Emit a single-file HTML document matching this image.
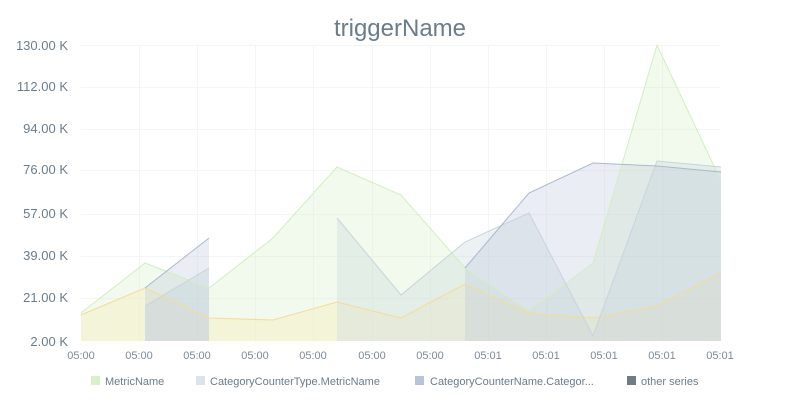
<!DOCTYPE html>
<html><head><meta charset="utf-8"><style>
body{margin:0;width:800px;height:400px;background:#fff;overflow:hidden;font-family:"Liberation Sans",sans-serif}
</style></head><body>
<svg width="800" height="400" xmlns="http://www.w3.org/2000/svg" font-family="Liberation Sans, sans-serif">
<text x="400" y="36" text-anchor="middle" font-size="24" fill="#6b7c8a">triggerName</text>
<g stroke="#f4f5f5" stroke-width="1">
<line x1="81" y1="45.5" x2="721" y2="45.5"/><line x1="81" y1="87.5" x2="721" y2="87.5"/><line x1="81" y1="129.5" x2="721" y2="129.5"/><line x1="81" y1="170.5" x2="721" y2="170.5"/><line x1="81" y1="214.5" x2="721" y2="214.5"/><line x1="81" y1="256.5" x2="721" y2="256.5"/><line x1="81" y1="298.5" x2="721" y2="298.5"/>
<line x1="139.5" y1="45" x2="139.5" y2="341"/><line x1="197.5" y1="45" x2="197.5" y2="341"/><line x1="255.5" y1="45" x2="255.5" y2="341"/><line x1="313.5" y1="45" x2="313.5" y2="341"/><line x1="372.5" y1="45" x2="372.5" y2="341"/><line x1="430.5" y1="45" x2="430.5" y2="341"/><line x1="488.5" y1="45" x2="488.5" y2="341"/><line x1="546.5" y1="45" x2="546.5" y2="341"/><line x1="604.5" y1="45" x2="604.5" y2="341"/><line x1="662.5" y1="45" x2="662.5" y2="341"/>
</g>
<g font-size="13" fill="#6b7c8a" text-anchor="end">
<text x="68" y="50">130.00 K</text><text x="68" y="91">112.00 K</text><text x="68" y="133">94.00 K</text><text x="68" y="174">76.00 K</text><text x="68" y="218">57.00 K</text><text x="68" y="260">39.00 K</text><text x="68" y="302">21.00 K</text><text x="68" y="346">2.00 K</text>
</g>
<g font-size="11" fill="#7d8a96" text-anchor="middle">
<text x="81" y="359">05:00</text><text x="139" y="359">05:00</text><text x="197" y="359">05:00</text><text x="255" y="359">05:00</text><text x="313" y="359">05:00</text><text x="372" y="359">05:00</text><text x="430" y="359">05:00</text><text x="488" y="359">05:01</text><text x="546" y="359">05:01</text><text x="604" y="359">05:01</text><text x="662" y="359">05:01</text><text x="720" y="359">05:01</text>
</g>
<!-- fills -->
<path d="M81,313 L145,263 L209,288 L273,238 L337,167 L401,195 L465,268 L529,311 L593,263 L657,45 L721,181 L721,341 L81,341Z" fill="#d4f0c4" fill-opacity="0.3"/>
<path d="M81,315 L145,288 L209,318 L273,320 L337,302 L401,318 L465,284 L529,313 L593,318 L657,306 L721,272 L721,341 L81,341Z" fill="#f6eec0" fill-opacity="0.45"/>
<path d="M145,306 L209,268 L209,341 L145,341Z" fill="#c9d6dc" fill-opacity="0.4"/>
<path d="M337,218 L401,295 L465,242 L529,213 L593,336 L657,161 L721,167 L721,341 L337,341Z" fill="#c9d6dc" fill-opacity="0.35"/>
<path d="M145,288 L209,238 L209,341 L145,341Z" fill="#b8c4dc" fill-opacity="0.3"/>
<path d="M465,268 L529,193 L593,163 L657,166 L721,172 L721,341 L465,341Z" fill="#b8c4dc" fill-opacity="0.3"/>
<!-- lines -->
<g fill="none" stroke-width="1">
<polyline points="81,313 145,263 209,288 273,238 337,167 401,195 465,268 529,311 593,263 657,45 721,181" stroke="#d2eec0"/>
<polyline points="81,315 145,288 209,318 273,320 337,302 401,318 465,284 529,313 593,318 657,306 721,272" stroke="#f5dd90"/>
<polyline points="145,306 209,268" stroke="#c9d3dc"/>
<polyline points="337,218 401,295 465,242 529,213 593,336 657,161 721,167" stroke="#c9d3dc"/>
<polyline points="145,288 209,238" stroke="#aab8d0"/>
<polyline points="465,268 529,193 593,163 657,166 721,172" stroke="#aab8d0"/>
</g>
<g font-size="11" fill="#6b7c8a">
<rect x="91" y="376" width="9" height="9" fill="#d7f2c6"/><text x="105" y="385">MetricName</text>
<rect x="196" y="376" width="9" height="9" fill="#dde3ea"/><text x="210" y="385">CategoryCounterType.MetricName</text>
<rect x="415" y="376" width="9" height="9" fill="#b8c4d8"/><text x="430" y="385">CategoryCounterName.Categor...</text>
<rect x="627" y="376" width="9" height="9" fill="#6f7c88"/><text x="641" y="385">other series</text>
</g>
</svg>
</body></html>
